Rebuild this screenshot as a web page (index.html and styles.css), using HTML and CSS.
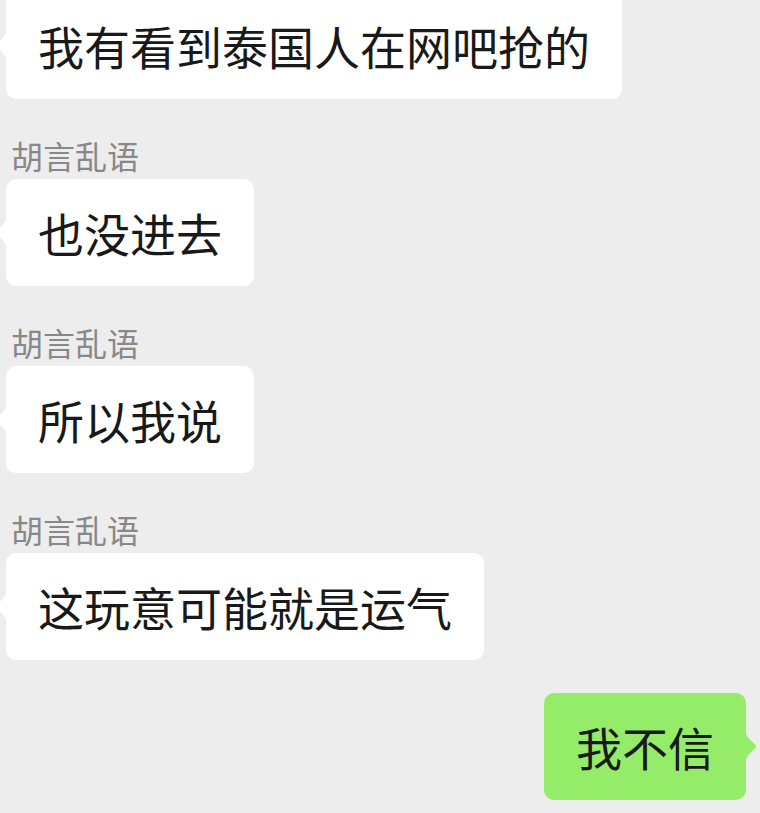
FILE: index.html
```html
<!DOCTYPE html>
<html lang="zh-CN">
<head>
  <meta charset="UTF-8">
  <meta name="viewport" content="width=device-width, initial-scale=1.0">
  <title>聊天</title>
  <link rel="stylesheet" href="styles.css">
</head>
<body>
  <div class="chat">
    <div class="msg left">
      <div class="bubble">我有看到泰国人在网吧抢的</div>
    </div>

    <div class="msg left">
      <div class="name">胡言乱语</div>
      <div class="bubble">也没进去</div>
    </div>

    <div class="msg left">
      <div class="name">胡言乱语</div>
      <div class="bubble">所以我说</div>
    </div>

    <div class="msg left">
      <div class="name">胡言乱语</div>
      <div class="bubble">这玩意可能就是运气</div>
    </div>

    <div class="msg right">
      <div class="bubble mine">我不信</div>
    </div>
  </div>
</body>
</html>
```

FILE: styles.css
```css
body {
  margin: 0;
  background: #ededed;
  font-family: "Noto Sans CJK SC", "Noto Sans", sans-serif;
  overflow: hidden;
}
.chat {
  display: flex;
  flex-direction: column;
  margin-top: -8px;
}
.msg {
  display: flex;
  flex-direction: column;
  align-items: flex-start;
  padding-left: 6px;
}
.msg + .msg {
  margin-top: 36px;
}
.msg.right {
  align-items: flex-end;
  padding-left: 0;
  padding-right: 14px;
  margin-top: 33px;
}
.name {
  font-size: 32px;
  line-height: 40px;
  color: #888;
  padding-left: 5px;
  margin-bottom: 4px;
}
.bubble {
  position: relative;
  background: #fff;
  color: #191919;
  font-size: 46px;
  line-height: 59px;
  padding: 24px 32px;
  border-radius: 10px;
}
.bubble::before {
  content: "";
  position: absolute;
  top: 50%;
  width: 14px;
  height: 36px;
  margin-top: -18px;
  background: inherit;
}
.left .bubble::before {
  left: -13px;
  clip-path: path("M14 0 C14 6 10 11 4 16 Q2 18 4 20 C10 25 14 30 14 36 Z");
}
.mine {
  background: #95ec69;
}
.right .bubble::before {
  left: calc(100% - 1px);
  clip-path: path("M0 0 C0 6 4 11 10 16 Q12 18 10 20 C4 25 0 30 0 36 Z");
}
```
